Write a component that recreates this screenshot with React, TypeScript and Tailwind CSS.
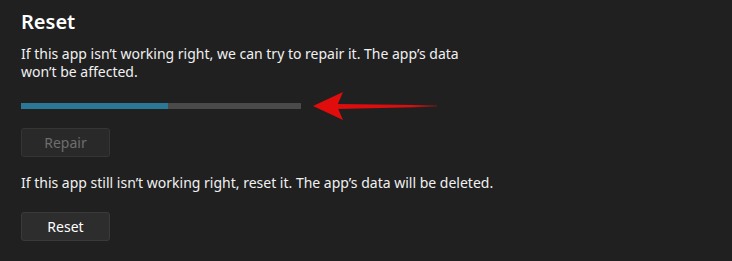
export default function App() {
  return (
    <div
      className="w-[732px] h-[261px] bg-[#202020] text-white overflow-hidden"
      style={{ fontFamily: '"Segoe UI", "Noto Sans", sans-serif' }}
    >
      <div className="pl-[21px] pt-[8px]">
        <h2 className="text-[20px] leading-[28px] font-semibold">Reset</h2>
        <p className="mt-[9px] text-[14px] leading-[18px] text-[#f0f0f0] w-[445px]">
          If this app isn’t working right, we can try to repair it. The app’s data won’t be affected.
        </p>

        {/* progress + annotation arrow */}
        <div className="mt-[10px] flex items-center h-[30px]">
          <div className="w-[280px] h-[6px] bg-[#4a4a4a] flex">
            <div className="w-[147px] h-full bg-[#2b7896]" />
          </div>
          <svg width="126" height="30" viewBox="0 0 126 30" className="ml-[11px]">
            <defs>
              <linearGradient id="tail" x1="0" x2="1" y1="0" y2="0">
                <stop offset="0" stopColor="#e10c0c" />
                <stop offset="0.75" stopColor="#d80f0f" />
                <stop offset="1" stopColor="#d01010" stopOpacity="0.3" />
              </linearGradient>
            </defs>
            <path d="M24 13 L125 14.3 L125 15.7 L24 18 Z" fill="url(#tail)" />
            <path d="M1 15 L31 1 L25 15 L31 29 Z" fill="#e10c0c" />
          </svg>
        </div>

        <button
          disabled
          className="mt-[7px] block w-[89px] h-[29px] rounded-[3px] border border-[#353535] bg-[#292929] text-[14px] text-[#6e6e6e]"
        >
          Repair
        </button>

        <p className="mt-[17px] text-[14px] leading-[18px] text-[#f0f0f0]">
          If this app still isn’t working right, reset it. The app’s data will be deleted.
        </p>

        <button className="mt-[20px] block w-[89px] h-[29px] rounded-[3px] border border-[#3a3a3a] bg-[#2d2d2d] text-[14px] text-white">
          Reset
        </button>
      </div>
    </div>
  );
}
